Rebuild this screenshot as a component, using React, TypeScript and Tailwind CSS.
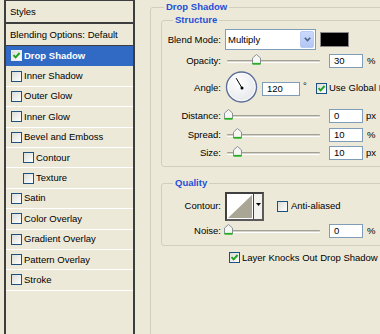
import React from 'react'

const LIST = [
  { label: 'Drop Shadow', checked: true, selected: true },
  { label: 'Inner Shadow' },
  { label: 'Outer Glow' },
  { label: 'Inner Glow' },
  { label: 'Bevel and Emboss' },
  { label: 'Contour', sub: true },
  { label: 'Texture', sub: true },
  { label: 'Satin' },
  { label: 'Color Overlay' },
  { label: 'Gradient Overlay' },
  { label: 'Pattern Overlay' },
  { label: 'Stroke' },
]

function Check({ checked, light }: { checked?: boolean; light?: boolean }) {
  return (
    <span
      className={`flex-none w-[11px] h-[11px] border flex items-center justify-center bg-gradient-to-br from-[#DCDCD7] to-white ${
        light ? 'border-[#E8EEF8]' : 'border-[#1C5180]'
      }`}
    >
      {checked && (
        <svg width="9" height="9" viewBox="0 0 9 9">
          <path d="M1.5 4.2 L3.6 6.4 L7.6 2" stroke="#21A121" strokeWidth="1.9" fill="none" />
        </svg>
      )}
    </span>
  )
}

function Field({ value, w = 'w-[34px]' }: { value: string; w?: string }) {
  return (
    <div className={`${w} h-[14px] flex-none border border-[#7F9DB9] bg-white pl-[4px] flex items-center`}>
      {value}
    </div>
  )
}

function Slider({ value }: { value: number }) {
  return (
    <div className="relative ml-[3px] w-[101px] h-[14px] flex-none">
      <div className="absolute left-[3px] top-[6px] w-[93px] h-[3px] rounded-[1px] bg-[#D6D4C8] border-t border-[#A3A195] border-b border-b-white" />
      <svg className="absolute top-0" style={{ left: value * 0.93 }} width="9" height="11" viewBox="0 0 9 11">
        <path d="M0.5 10 V4 L4.5 0.5 L8.5 4 V10" fill="#F6F6F3" stroke="#8A9098" />
        <path d="M0.5 9.8 H8.5" stroke="#22B022" strokeWidth="1.8" />
      </svg>
    </div>
  )
}

function Label({ text, className = '' }: { text: string; className?: string }) {
  return <div className={`w-[59px] flex-none text-right whitespace-nowrap ${className}`}>{text}</div>
}

function Dial() {
  return (
    <svg width="33" height="32" viewBox="0 0 33 32" className="flex-none ml-[4px]">
      <defs>
        <radialGradient id="dial" cx="0.4" cy="0.35" r="0.7">
          <stop offset="0" stopColor="#FFFFFF" />
          <stop offset="1" stopColor="#E4E6EA" />
        </radialGradient>
      </defs>
      <circle cx="16.5" cy="16" r="15" fill="url(#dial)" stroke="#5D6F99" strokeWidth="1.4" />
      <circle cx="16.5" cy="16" r="13.6" fill="none" stroke="#FFFFFF" strokeWidth="0.8" />
      <line x1="17" y1="17" x2="11.2" y2="7.2" stroke="#000" strokeWidth="1" />
      <circle cx="17" cy="17" r="1.5" fill="#000" />
    </svg>
  )
}

function ContourPicker() {
  return (
    <div className="ml-[4px] w-[39px] h-[29px] flex-none border-2 border-[#404040] border-r-[#5a5a5a] border-b-[#5a5a5a] bg-white flex">
      <svg width="26" height="25" viewBox="0 0 26 25" className="flex-none">
        <polygon points="1,24 25,1 25,24" fill="#A9A696" />
      </svg>
      <div className="w-[1px] bg-[#404040]" />
      <div className="flex-1 bg-[#F3F2EC] flex justify-center pt-[9px]">
        <svg width="5" height="3" viewBox="0 0 5 3">
          <polygon points="0,0 5,0 2.5,3" fill="#000" />
        </svg>
      </div>
    </div>
  )
}

export default function App() {
  return (
    <div className="w-[380px] h-[334px] overflow-hidden bg-[#ECE9D8] flex text-[9.5px] leading-[12px] text-black font-['Liberation_Sans',Arial,sans-serif]">
      {/* Styles list */}
      <div className="ml-[4px] w-[131px] flex-none h-full border-l-2 border-r-2 border-[#3E3E3E] flex flex-col">
        <div className="h-[24px] border-t border-b-2 border-[#3E3E3E] pl-[4px] flex items-center">Styles</div>
        <div className="h-[22px] border-b border-[#3E3E3E] pl-[4px] flex items-center whitespace-nowrap">
          Blending Options: Default
        </div>
        {LIST.map((it) => (
          <div
            key={it.label}
            className={`h-[20.4px] flex items-center border-b whitespace-nowrap ${it.sub ? 'pl-[17px]' : 'pl-[5px]'} ${
              it.selected ? 'bg-[#316AC5] border-[#316AC5] text-white font-bold' : 'border-white'
            }`}
          >
            <Check checked={it.checked} light={it.selected} />
            <span className="ml-[2px]">{it.label}</span>
          </div>
        ))}
      </div>

      {/* Settings */}
      <div className="flex-1 min-w-0">
        <fieldset className="mt-[1px] ml-[15px] w-[260px] h-[400px] border border-[#D0CEBF] rounded-[3px]">
          <legend className="ml-[13px] px-[2px] font-bold text-[#1F4FD8] leading-[12px]">Drop Shadow</legend>

          <fieldset className="mt-[1px] ml-[10px] w-[240px] border border-[#D0CEBF] rounded-[3px] pb-[6px]">
            <legend className="ml-[11px] px-[2px] font-bold text-[#1F4FD8] leading-[12px]">Structure</legend>

            <div className="mt-[3px] h-[21px] flex items-center">
              <Label text="Blend Mode:" />
              <div className="ml-[4px] w-[91px] h-[21px] flex-none border border-[#7F9DB9] bg-white flex items-center">
                <span className="flex-1 pl-[2px]">Multiply</span>
                <span className="w-[14px] h-[17px] mr-[1px] rounded-[2px] border border-[#BACCF4] bg-gradient-to-b from-[#CBDAFC] to-[#B2C6F3] flex items-center justify-center">
                  <svg width="7" height="5" viewBox="0 0 7 5">
                    <path d="M0.8 0.8 L3.5 3.6 L6.2 0.8" stroke="#4D6185" strokeWidth="1.6" fill="none" />
                  </svg>
                </span>
              </div>
              <div className="ml-[4px] w-[29px] h-[15px] flex-none bg-black border border-[#8A8A8A]" />
            </div>

            <div className="mt-[4px] h-[14px] flex items-center">
              <Label text="Opacity:" />
              <Slider value={30} />
              <div className="ml-[4px]"><Field value="30" /></div>
              <span className="ml-[4px]">%</span>
            </div>

            <div className="mt-[3px] h-[32px] flex items-start">
              <Label text="Angle:" className="mt-[11px]" />
              <Dial />
              <div className="ml-[4px] mt-[11px]"><Field value="120" w="w-[38px]" /></div>
              <div className="ml-[3px] mt-[9px] w-[13px] flex-none">°</div>
              <div className="mt-[12px] flex"><Check checked /></div>
              <div className="ml-[2px] mt-[11px] whitespace-nowrap">Use Global Light</div>
            </div>

            <div className="mt-[6px] h-[14px] flex items-center">
              <Label text="Distance:" />
              <Slider value={0} />
              <div className="ml-[4px]"><Field value="0" /></div>
              <span className="ml-[3px]">px</span>
            </div>

            <div className="mt-[5px] h-[14px] flex items-center">
              <Label text="Spread:" />
              <Slider value={10} />
              <div className="ml-[4px]"><Field value="10" /></div>
              <span className="ml-[4px]">%</span>
            </div>

            <div className="mt-[4px] h-[14px] flex items-center">
              <Label text="Size:" />
              <Slider value={10} />
              <div className="ml-[4px]"><Field value="10" /></div>
              <span className="ml-[3px]">px</span>
            </div>
          </fieldset>

          <fieldset className="mt-[10px] ml-[10px] w-[240px] border border-[#D0CEBF] rounded-[3px] pb-[7px]">
            <legend className="ml-[11px] px-[2px] font-bold text-[#1F4FD8] leading-[12px]">Quality</legend>

            <div className="mt-[3px] h-[28px] flex items-center">
              <Label text="Contour:" />
              <ContourPicker />
              <div className="ml-[13px] flex"><Check /></div>
              <span className="ml-[3px] whitespace-nowrap">Anti-aliased</span>
            </div>

            <div className="mt-[4px] h-[14px] flex items-center">
              <Label text="Noise:" />
              <Slider value={0} />
              <div className="ml-[4px]"><Field value="0" /></div>
              <span className="ml-[4px]">%</span>
            </div>
          </fieldset>

          <div className="mt-[6px] ml-[78px] h-[11px] flex items-center">
            <Check checked />
            <span className="ml-[2px] whitespace-nowrap">Layer Knocks Out Drop Shadow</span>
          </div>
        </fieldset>
      </div>
    </div>
  )
}
